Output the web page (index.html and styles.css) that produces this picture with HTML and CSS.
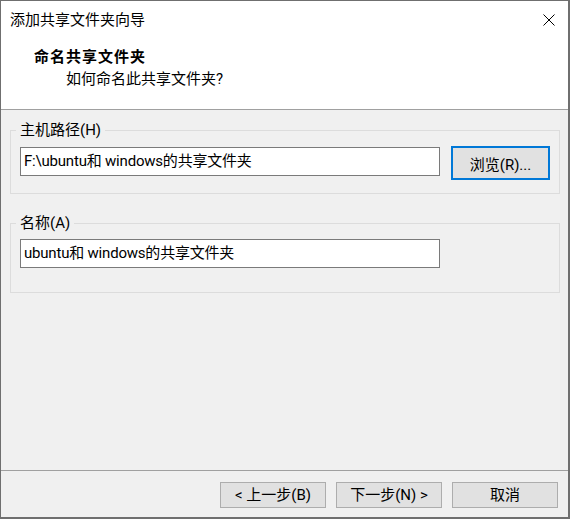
FILE: index.html
```html
<!DOCTYPE html>
<html lang="zh-CN">
<head>
<meta charset="utf-8">
<title>添加共享文件夹向导</title>
<link rel="stylesheet" href="styles.css">
</head>
<body>
<div class="window">
  <div class="header">
    <div class="titlebar">
      <span class="title">添加共享文件夹向导</span>
      <svg class="close" width="12" height="12" viewBox="0 0 12 12"><path d="M0.5 0.5 L11.5 11.5 M11.5 0.5 L0.5 11.5" stroke="#000" stroke-width="1" fill="none"/></svg>
    </div>
    <div class="heading">命名共享文件夹</div>
    <div class="subheading">如何命名此共享文件夹?</div>
  </div>
  <div class="content">
    <fieldset class="group group-path">
      <legend>主机路径(H)</legend>
      <div class="row">
        <div class="input">F:\ubuntu和 windows的共享文件夹</div>
        <button class="btn btn-browse">浏览(R)...</button>
      </div>
    </fieldset>
    <fieldset class="group group-name">
      <legend>名称(A)</legend>
      <div class="row">
        <div class="input">ubuntu和 windows的共享文件夹</div>
      </div>
    </fieldset>
  </div>
  <div class="footer">
    <button class="btn">&lt; 上一步(B)</button>
    <button class="btn">下一步(N) &gt;</button>
    <button class="btn btn-cancel">取消</button>
  </div>
</div>
</body>
</html>
```
FILE: styles.css
```css
* { box-sizing: border-box; }
html, body { margin: 0; padding: 0; }
body {
  width: 570px;
  height: 519px;
  font-family: Roboto, "Noto Sans CJK SC", sans-serif;
  font-size: 15px;
  color: #000;
  background: #f0f0f0;
}
.window {
  width: 570px;
  height: 519px;
  border-style: solid;
  border-color: #6f6f6f;
  border-width: 1px 2px 2px 1px;
  display: flex;
  flex-direction: column;
  background: #f0f0f0;
}
.header {
  height: 109px;
  background: #fff;
  border-bottom: 1px solid #a0a0a0;
}
.titlebar {
  height: 38px;
  display: flex;
  align-items: center;
  justify-content: space-between;
  padding: 0 13px 0 9px;
}
.title { line-height: 20px; }
.close { display: block; }
.heading {
  font-weight: bold;
  line-height: 20px;
  letter-spacing: 1px;
  margin: 8px 0 0 33px;
}
.subheading {
  line-height: 20px;
  margin: 2px 0 0 65px;
}
.content {
  flex: 1;
  padding: 10px 8px 0 9px;
  display: flex;
  flex-direction: column;
}
.group {
  margin: 0;
  border: 1px solid #dcdcdc;
  padding: 0 9px 0 5px;
  min-width: 0;
}
.group legend {
  padding: 0 4px;
  line-height: 20px;
}
.group-path { height: 74px; }
.group-name { height: 80px; margin-top: 19px; }
.row {
  display: flex;
  align-items: flex-start;
  gap: 11px;
  padding-left: 4px;
}
.group-path .row { margin-top: 7px; }
.group-name .row { margin-top: 6px; }
.input {
  width: 420px;
  height: 29px;
  background: #fff;
  border: 1px solid #7a7a7a;
  padding: 0 4px 0 3px;
  line-height: 26px;
  letter-spacing: -0.2px;
  white-space: nowrap;
}
.btn {
  font-family: inherit;
  font-size: 15px;
  color: #000;
  background: #e1e1e1;
  border: 1px solid #adadad;
  padding: 0;
  margin: 0;
}
.btn-browse {
  width: 99px;
  height: 34px;
  border: 2px solid #0078d7;
  margin-top: -1px;
}
.footer {
  height: 47px;
  border-top: 1px solid #a0a0a0;
  display: flex;
  justify-content: flex-end;
  align-items: flex-start;
  gap: 10px;
  padding: 11px 10px 0 0;
}
.footer .btn {
  width: 106px;
  height: 26px;
  line-height: 22px;
}
```
